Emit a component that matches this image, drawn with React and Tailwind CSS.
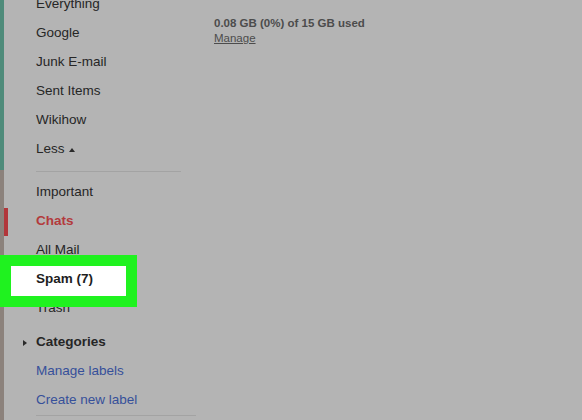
const FONT = { fontFamily: '"Liberation Sans", Arial, sans-serif' };

function Row({ children, bar = false, className = '' }) {
  return (
    <div className={`flex h-[29px] items-center ${className}`}>
      <span className={`h-[28px] w-[4px] ${bar ? 'bg-[#b2363a]' : ''}`} />
      <span className="ml-[28px]">{children}</span>
    </div>
  );
}

export default function App() {
  return (
    <div
      className="flex h-[420px] w-[582px] overflow-hidden bg-[#b4b4b4] text-[13.5px] text-[#262626]"
      style={FONT}
    >
      <div className="flex w-[4px] flex-col">
        <div className="h-[170px] bg-[#4f8b7a]" />
        <div className="flex-1 bg-[#8c827c]" />
      </div>

      <div className="relative w-[206px] shrink-0">
        <div className="-mt-[10px]">
          <Row>Everything</Row>
          <Row>Google</Row>
          <Row>Junk E-mail</Row>
          <Row>Sent Items</Row>
          <Row>Wikihow</Row>
          <Row>
            <span className="flex items-center gap-[4px]">
              Less
              <span className="h-0 w-0 border-x-[3.5px] border-b-[4px] border-x-transparent border-b-[#2a2a2a]" />
            </span>
          </Row>
          <div className="flex h-[14px] items-center pl-[32px]">
            <div className="h-px w-[145px] bg-[#a3a3a3]" />
          </div>
          <Row>Important</Row>
          <Row bar className="font-bold text-[#b33a3c]">Chats</Row>
          <Row className="relative z-0">All Mail</Row>
          <div className="relative z-20">
            <div className="absolute -left-[4px] -top-[10px] h-[52px] w-[137px] bg-[#1ff21f] p-[11px]">
              <div className="h-full w-full bg-white" />
            </div>
            <Row className="relative font-bold text-[#1e1e1e]">Spam (7)</Row>
          </div>
          <Row className="relative z-0">Trash</Row>
          <div className="h-[5px]" />
          <div className="flex h-[29px] items-center font-bold">
            <span className="flex w-[32px] justify-end pr-[9px]">
              <span className="h-0 w-0 border-y-[3.5px] border-l-[4px] border-y-transparent border-l-[#2a2a2a]" />
            </span>
            Categories
          </div>
          <Row className="text-[#36509a]">Manage labels</Row>
          <Row className="text-[#36509a]">Create new label</Row>
          <div className="ml-[32px] h-px w-[160px] bg-[#a3a3a3]" />
        </div>
      </div>

      <div className="pl-[4px] pt-[16px] text-[11.5px] leading-[15px] text-[#4c4c4c]">
        <div className="font-bold">0.08 GB (0%) of 15 GB used</div>
        <div className="underline">Manage</div>
      </div>
    </div>
  );
}
